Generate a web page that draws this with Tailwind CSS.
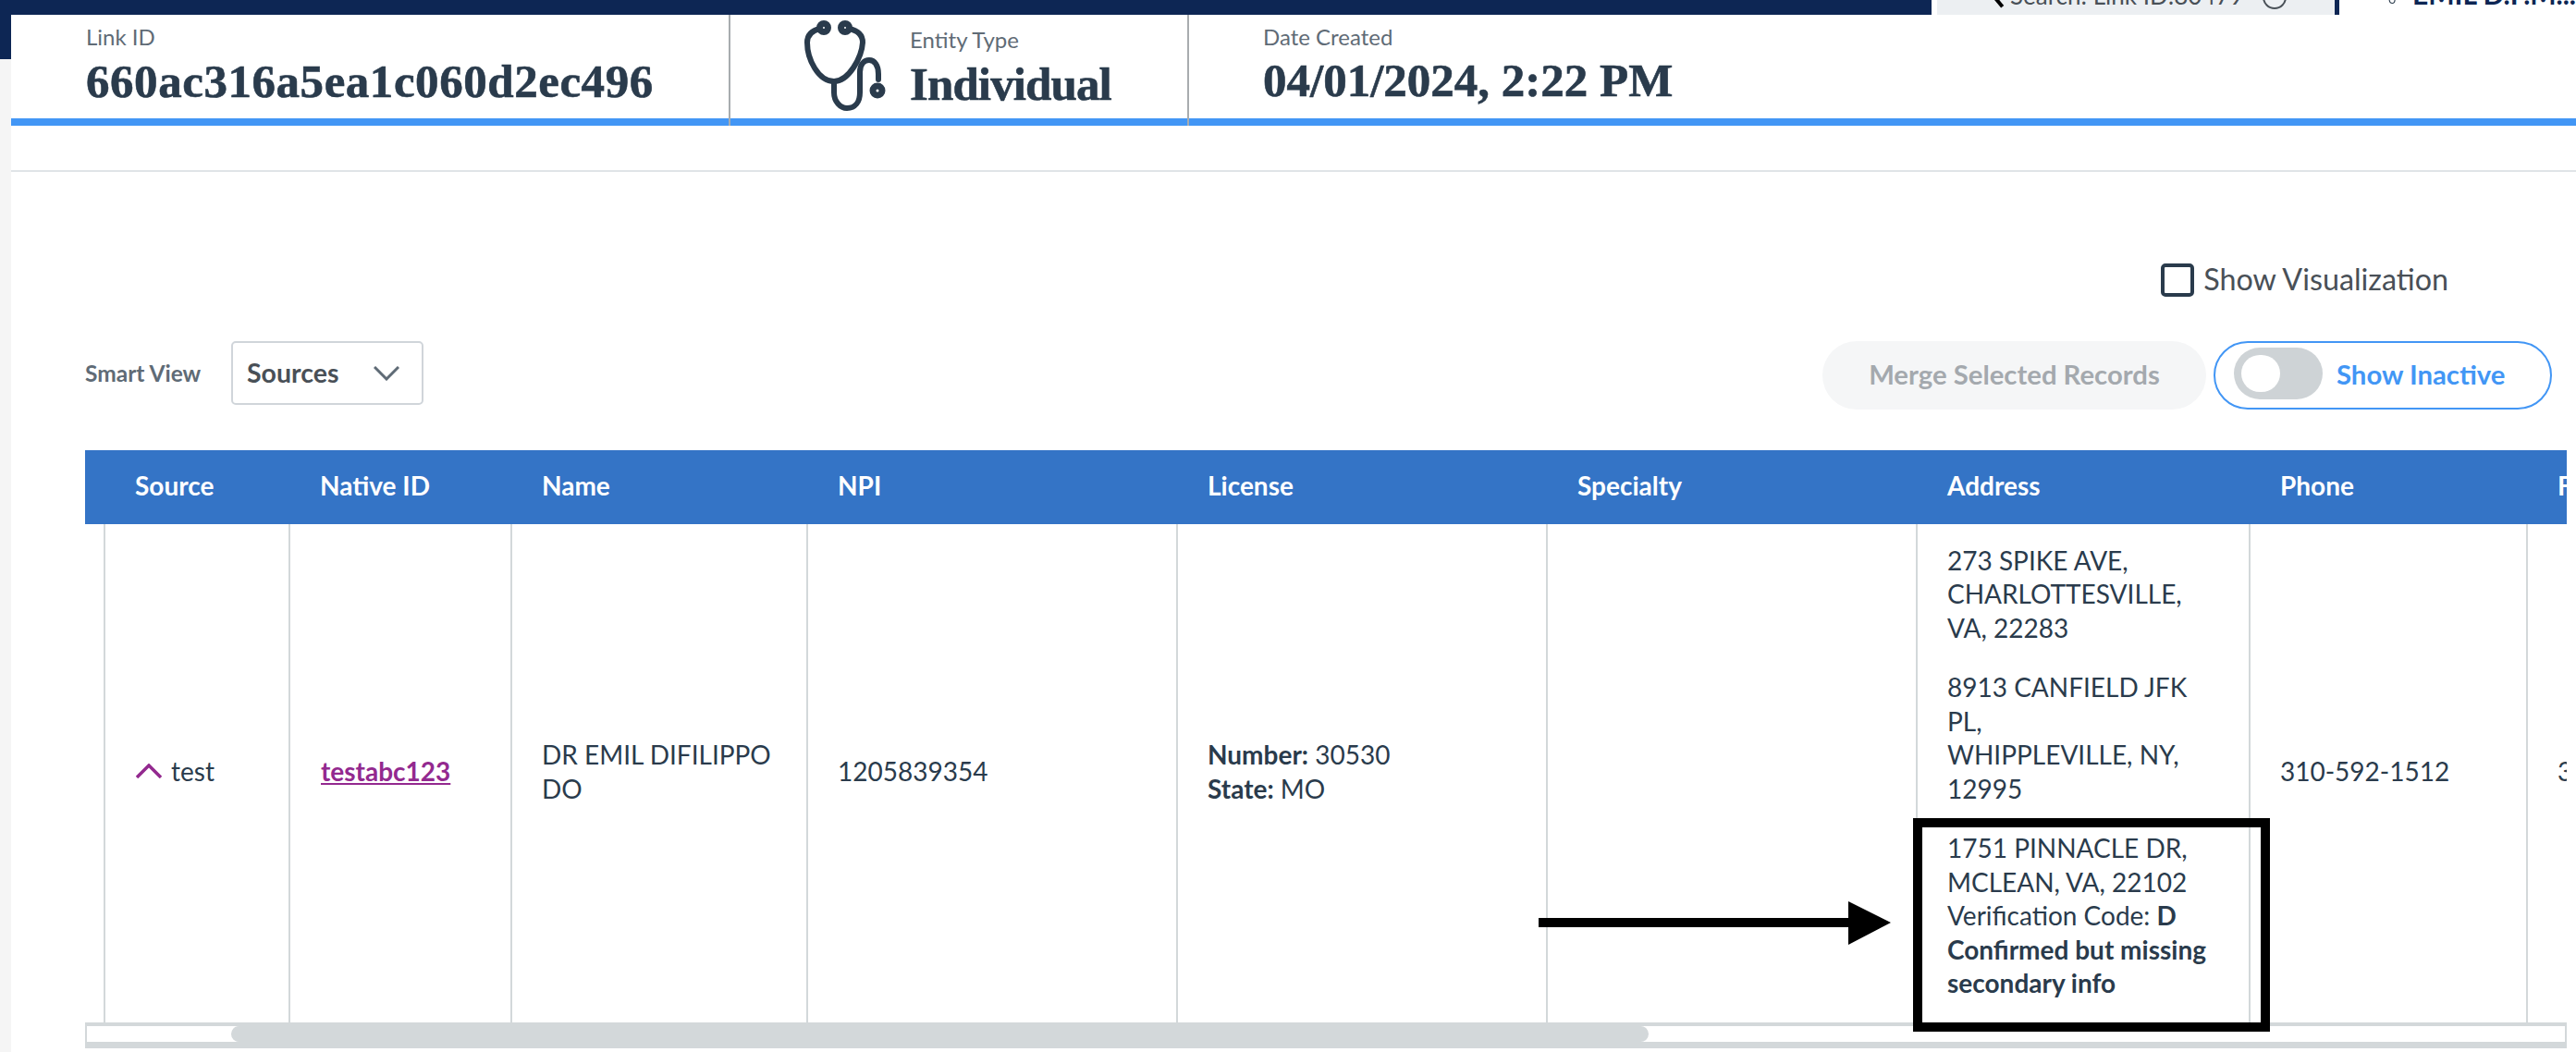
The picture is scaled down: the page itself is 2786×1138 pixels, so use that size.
<!DOCTYPE html>
<html lang="en">
<head>
    <meta charset="UTF-8">
    <title>Link Details</title>
    <script src="https://cdn.jsdelivr.net/npm/@tailwindcss/browser@4"></script>
</head>
<body class="bg-white font-['Lato',sans-serif] text-[#2a3b4c]">
<div class="relative w-[2786px] h-[1138px] overflow-hidden flex bg-white">

    <!-- left rail -->
    <div class="w-3 shrink-0 bg-[#f5f5f5]">
        <div class="h-16 bg-[#0d2654]"></div>
    </div>

    <div class="flex-1 min-w-0">
        <!-- top nav, cut off by the crop -->
        <div class="h-4 flex overflow-hidden">
            <div class="w-[2077px] shrink-0 bg-[#0d2654]"></div>
            <div class="w-[6px] shrink-0"></div>
            <div class="w-[430px] shrink-0 bg-[#eceff2]">
                <div class="h-[8px] flex items-end pl-[57px] gap-[14px] text-[26px] leading-[26px] text-[#495057]">
                    <span class="w-[4px] h-[24px] bg-black rotate-[-40deg] mb-[-2px] ml-[4px]"></span>
                    <span class="whitespace-nowrap">Search: Link ID:80479</span>
                    <span class="w-[26px] h-[26px] shrink-0 rounded-full border-2 border-[#495057] mb-[-2px] ml-[6px]"></span>
                </div>
            </div>
            <div class="w-[5px] shrink-0 bg-[#0d2654]"></div>
            <div class="flex-1 min-w-0">
                <div class="h-[8px] flex items-end pl-[53px] gap-4 text-[30px] leading-[30px] font-bold text-[#0d2654] whitespace-nowrap">
                    <svg class="w-[18px] h-[24px] mb-[-2px]" viewBox="0 0 18 24" fill="none" stroke="#2a3b4c" stroke-width="2"><path d="M2 2V14C2 19 5 22 8 22C11 22 13 19 13 14V10"/><circle cx="15" cy="8" r="2"/></svg>
                    <span>EMIL D.F.M...</span>
                </div>
            </div>
        </div>

        <!-- link summary -->
        <header class="h-[120px] flex border-b-8 border-[#4296f5]">
            <div class="w-[778px] pl-[81px] pt-[9px] border-r-2 border-[#a8acaf] h-[120px]">
                <div class="text-[24px] leading-[30px] text-[#5f6b76]">Link ID</div>
                <div class="mt-2 font-['Liberation_Serif',serif] font-bold text-[51px] leading-[50px] [-webkit-text-stroke:0.6px_#2a3b4c] tracking-[0.55px]">660ac316a5ea1c060d2ec496</div>
            </div>
            <div class="w-[496px] pl-[80px] flex gap-[26px] border-r-2 border-[#a8acaf] h-[120px]">
                <svg class="w-[88px] h-[98px] mt-[6px]" viewBox="0 0 88 98" fill="none" stroke="#2a3b4c" stroke-width="6" stroke-linecap="round">
                    <circle cx="21" cy="8" r="4.5" stroke-width="7"/>
                    <circle cx="44" cy="8" r="4.5" stroke-width="7"/>
                    <path d="M17 9C8 11 3 16 3 24C3 42 15 66 32 66C48 66 62 40 63 24C63 16 58 11 48 9"/>
                    <path d="M32 66V78C32 88 39 95 46 95C55 95 60 88 60 78V56C60 47 65 43 70 43C76 43 80 49 80 58V64"/>
                    <circle cx="79" cy="76" r="5" stroke-width="7"/>
                </svg>
                <div class="pt-[12px]">
                    <div class="text-[24px] leading-[30px] text-[#5f6b76]">Entity Type</div>
                    <div class="mt-2 font-['Liberation_Serif',serif] font-bold text-[51px] leading-[50px] [-webkit-text-stroke:0.6px_#2a3b4c] tracking-[-0.9px]">Individual</div>
                </div>
            </div>
            <div class="pl-[80px] pt-[9px]">
                <div class="text-[24px] leading-[30px] text-[#5f6b76]">Date Created</div>
                <div class="mt-[7px] font-['Liberation_Serif',serif] font-bold text-[51px] leading-[50px] [-webkit-text-stroke:0.6px_#2a3b4c]">04/01/2024, 2:22 PM</div>
            </div>
        </header>

        <div class="h-[50px] border-b-2 border-[#e0e4e7]"></div>

        <!-- controls -->
        <div class="flex justify-end items-center gap-[10px] h-[36px] mt-[99px] pr-[138px]">
            <span class="w-9 h-9 rounded-[5px] border-4 border-[#2a3b4c]"></span>
            <span class="text-[32.3px] text-[#495057] -mt-[2px]">Show Visualization</span>
        </div>
        <div class="flex items-center h-[74px] mt-[48px] pl-[80px] pr-[26px]">
            <span class="text-[24.5px] font-bold text-[#5f6b76] w-[158px] -mt-[3px]">Smart View</span>
            <div class="w-[208px] h-[69px] -mt-[5px] border-2 border-[#d0d5da] rounded-[5px] flex items-center justify-between pl-[15px] pr-6">
                <span class="text-[28.5px] font-bold text-[#495057]">Sources</span>
                <svg class="w-7 h-4" viewBox="0 0 28 16" fill="none" stroke="#5f6b76" stroke-width="3"><path d="M1 1L14 14L27 1"/></svg>
            </div>
            <div class="ml-auto w-[415px] h-[74px] rounded-full bg-[#f5f6f7] flex items-center justify-center text-[29.3px] font-bold text-[#a4a9ae]"><span class="-mt-[2px]">Merge Selected Records</span></div>
            <div class="ml-[8px] w-[366px] h-[74px] rounded-full border-2 border-[#4296f5] bg-white flex items-center pl-5 gap-[15px]">
                <span class="w-[96px] h-[56px] rounded-full bg-[#ced3d6] flex items-center pl-2 -mt-1">
                    <span class="w-[42px] h-[40px] rounded-full bg-white"></span>
                </span>
                <span class="text-[29.3px] font-bold text-[#4296f5] -mt-[2px]">Show Inactive</span>
            </div>
        </div>

        <!-- sources table -->
        <div class="mt-[44px] ml-[80px] mr-[10px] overflow-hidden">
            <table class="table-fixed border-collapse w-[2800px] text-[28px] leading-[36.5px]">
                <colgroup>
                    <col class="w-[21px]"><col class="w-[200px]"><col class="w-[240px]"><col class="w-[320px]"><col class="w-[400px]"><col class="w-[400px]"><col class="w-[400px]"><col class="w-[360px]"><col class="w-[300px]"><col class="w-[159px]">
                </colgroup>
                <thead>
                    <tr class="h-[80px] bg-[#3474c6] text-white text-left font-bold">
                        <th></th>
                        <th class="pl-[33px] pb-1 font-bold">Source</th>
                        <th class="pl-[33px] pb-1 font-bold">Native ID</th>
                        <th class="pl-[33px] pb-1 font-bold">Name</th>
                        <th class="pl-[33px] pb-1 font-bold">NPI</th>
                        <th class="pl-[33px] pb-1 font-bold">License</th>
                        <th class="pl-[33px] pb-1 font-bold">Specialty</th>
                        <th class="pl-[33px] pb-1 font-bold">Address</th>
                        <th class="pl-[33px] pb-1 font-bold">Phone</th>
                        <th class="pl-[33px] pb-1 font-bold">Fax</th>
                    </tr>
                </thead>
                <tbody>
                    <tr class="h-[539px]">
                        <td class="border-r-2 border-[#d3d8da]"></td>
                        <td class="border-r-2 border-[#d3d8da] pl-[33px] pb-2">
                            <span class="inline-flex items-center gap-[10px]">
                                <svg class="w-7 h-4" viewBox="0 0 28 16" fill="none" stroke="#93298f" stroke-width="3.5"><path d="M1 15L14 2L27 15"/></svg>
                                test
                            </span>
                        </td>
                        <td class="border-r-2 border-[#d3d8da] pl-[33px] pb-1"><a href="#" class="font-bold underline text-[#93298f]">testabc123</a></td>
                        <td class="border-r-2 border-[#d3d8da] pl-[32px] pr-6 pb-1">DR EMIL DIFILIPPO DO</td>
                        <td class="border-r-2 border-[#d3d8da] pl-[32px] pb-1">1205839354</td>
                        <td class="border-r-2 border-[#d3d8da] pl-[32px] pb-1"><b>Number:</b> 30530<br><b>State:</b> MO</td>
                        <td class="border-r-2 border-[#d3d8da]"></td>
                        <td class="border-r-2 border-[#d3d8da] pl-[32px] pr-2 pb-1">
                            <p>273 SPIKE AVE,<br>CHARLOTTESVILLE,<br>VA, 22283</p>
                            <p class="mt-7">8913 CANFIELD JFK<br>PL,<br>WHIPPLEVILLE, NY,<br>12995</p>
                            <p class="mt-7">1751 PINNACLE DR,<br>MCLEAN, VA, 22102<br>Verification Code: <b>D</b><br><b>Confirmed but missing<br>secondary info</b></p>
                        </td>
                        <td class="border-r-2 border-[#d3d8da] pl-[32px] pb-1">310-592-1512</td>
                        <td class="pl-[32px] pb-1 whitespace-nowrap">310-592-1513</td>
                    </tr>
                </tbody>
            </table>
            <!-- scrollbar -->
            <div class="h-[28px] bg-[#d3d8da] pt-1 px-[2px]">
                <div class="h-[17px] bg-white flex">
                    <div class="w-[156px]"></div>
                    <div class="w-[1533px] bg-[#d3d8da] rounded-full"></div>
                </div>
            </div>
        </div>
    </div>

    <!-- annotation drawn over the screenshot -->
    <div class="absolute left-[2069px] top-[885px] w-[386px] h-[231px] border-[10px] border-black"></div>
    <svg class="absolute left-[1664px] top-[973px] w-[382px] h-[50px]" viewBox="0 0 382 50">
        <path d="M0 20H335V2L381 25L335 49V30H0Z" fill="#000"/>
    </svg>
</div>
</body>
</html>
